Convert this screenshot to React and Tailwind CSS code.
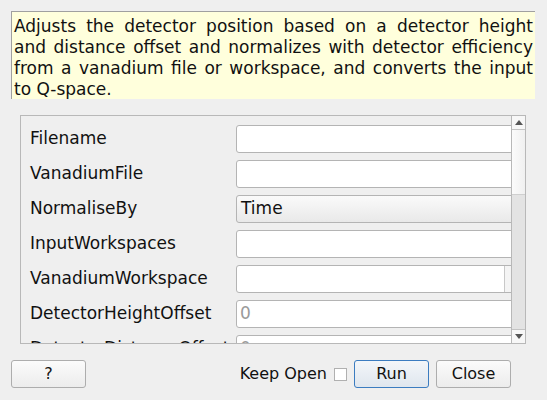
import React from 'react';

const FONT = { fontFamily: '"DejaVu Sans", "Liberation Sans", sans-serif' };

const DESCRIPTION = [
  'Adjusts the detector position based on a detector height',
  'and distance offset and normalizes with detector efficiency',
  'from a vanadium file or workspace, and converts the input',
];

const ROWS = [
  { label: 'Filename', kind: 'text' },
  { label: 'VanadiumFile', kind: 'text' },
  { label: 'NormaliseBy', kind: 'combo', value: 'Time' },
  { label: 'InputWorkspaces', kind: 'text' },
  { label: 'VanadiumWorkspace', kind: 'editcombo' },
  { label: 'DetectorHeightOffset', kind: 'text', placeholder: '0' },
  { label: 'DetectorDistanceOffset', kind: 'text', placeholder: '0' },
];

function Field({ row }) {
  if (row.kind === 'combo') {
    return (
      <div className="flex h-[28px] w-[290px] shrink-0 items-center rounded-[3px] border border-[#b4b4b4] bg-gradient-to-b from-[#fafafa] to-[#e9e9e9] pl-[4px] text-[17px] text-[#111]">
        {row.value}
      </div>
    );
  }
  if (row.kind === 'editcombo') {
    return (
      <div className="flex h-[28px] w-[290px] shrink-0 rounded-[3px] border border-[#b4b4b4] bg-white">
        <div className="w-[268px] border-r border-[#c8c8c8]" />
        <div className="flex-1 bg-[#f4f4f4]" />
      </div>
    );
  }
  return (
    <div className="flex h-[28px] w-[290px] shrink-0 items-center rounded-[3px] border border-[#b4b4b4] bg-white pl-[3px] text-[17px] text-[#9a9a9a]">
      {row.placeholder}
    </div>
  );
}

function Arrow({ up }) {
  return (
    <svg width="8" height="5" viewBox="0 0 8 5">
      <path d={up ? 'M0 5 L4 0 L8 5 Z' : 'M0 0 L8 0 L4 5 Z'} fill="#555" />
    </svg>
  );
}

export default function App() {
  return (
    <div className="flex h-[400px] w-[547px] flex-col bg-[#efefef] text-[#111]" style={FONT}>
      <div className="ml-[11px] mt-[11px] h-[88px] w-[524px] border-l border-t border-[#a0a0a0] bg-[#ffffdc] px-[2px] pt-[4px] text-[17px] leading-[21px]">
        {DESCRIPTION.map((line) => (
          <div key={line} className="whitespace-nowrap text-justify [text-align-last:justify]">
            {line}
          </div>
        ))}
        <div>to Q-space.</div>
      </div>

      <div className="ml-[20px] mt-[16px] flex h-[229px] w-[506px] overflow-hidden border border-[#b8b8b8]">
        <div className="flex flex-1 flex-col gap-[7px] overflow-hidden pl-[9px] pt-[9px]">
          {ROWS.map((row) => (
            <div key={row.label} className="flex items-center">
              <div className="w-[206px] shrink-0 whitespace-nowrap text-[17px]">{row.label}</div>
              <Field row={row} />
            </div>
          ))}
        </div>
        <div className="flex w-[14px] shrink-0 flex-col border-l border-[#b8b8b8] bg-[#e3e3e3]">
          <div className="flex h-[14px] items-center justify-center border-b border-[#c4c4c4] bg-[#f7f7f7]">
            <Arrow up />
          </div>
          <div className="h-[65px] border-b border-[#cfcfcf] bg-gradient-to-r from-[#fbfbfb] to-[#f0f0f0]" />
          <div className="flex-1" />
          <div className="flex h-[14px] items-center justify-center border-t border-[#c4c4c4] bg-[#f7f7f7]">
            <Arrow />
          </div>
        </div>
      </div>

      <div className="ml-[11px] mt-[16px] flex h-[28px] w-[500px] items-center text-[16px]">
        <button className="h-[28px] w-[75px] rounded-[3px] border border-[#adadad] bg-gradient-to-b from-[#fbfbfb] to-[#ececec]">
          ?
        </button>
        <div className="flex-1" />
        <span className="mr-[7px]">Keep Open</span>
        <div className="mr-[7px] h-[13px] w-[13px] border border-[#b0b0b0] bg-white" />
        <button className="h-[28px] w-[75px] rounded-[3px] border border-[#3b7cc0] bg-gradient-to-b from-[#f3f6f9] to-[#dfe6ee]">
          Run
        </button>
        <button className="ml-[7px] h-[28px] w-[75px] rounded-[3px] border border-[#adadad] bg-gradient-to-b from-[#fbfbfb] to-[#ececec]">
          Close
        </button>
      </div>
    </div>
  );
}
